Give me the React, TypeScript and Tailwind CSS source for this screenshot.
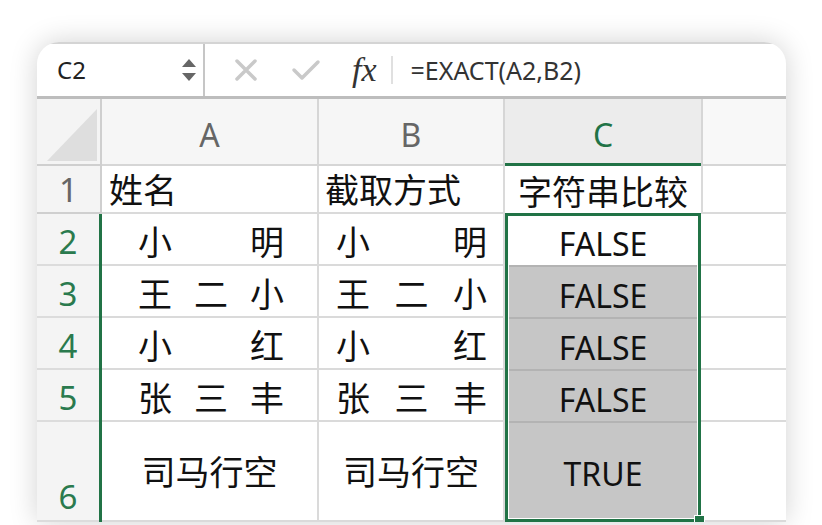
import React from "react";

const sans = { fontFamily: '"Noto Sans", "Noto Sans CJK SC", sans-serif' };

function Distributed({ chars, px }: { chars: string[]; px: string }) {
  return (
    <div className={`flex w-full justify-between ${px}`}>
      {chars.map((c, i) => (
        <span key={i}>{c}</span>
      ))}
    </div>
  );
}

const rowsAB: { a: string[]; b: string[] }[] = [
  { a: ["小", "明"], b: ["小", "明"] },
  { a: ["王", "二", "小"], b: ["王", "二", "小"] },
  { a: ["小", "红"], b: ["小", "红"] },
  { a: ["张", "三", "丰"], b: ["张", "三", "丰"] },
];

export default function App() {
  return (
    <div className="h-[525px] w-[822px] overflow-hidden bg-white pl-[37px] pr-[36px] pt-[42px]" style={sans}>
      <div className="relative w-[749px] overflow-hidden rounded-t-[22px] bg-white shadow-[0_0_28px_rgba(0,0,0,0.18)]">
        {/* Formula bar */}
        <div className="flex h-[57px] items-stretch border-t-2 border-b-[3px] border-t-[#d4d4d4] border-b-[#bdbdbd]">
          <div className="flex w-[168px] items-center justify-between border-r-2 border-[#c6c6c6] pl-[20px] pr-[6px] text-[24px] text-[#222]">
            <span className="leading-none">C2</span>
            <svg width="16" height="26" viewBox="0 0 16 26">
              <path d="M8 2 L15 10 L1 10 Z" fill="#666" />
              <path d="M1 16 L15 16 L8 24 Z" fill="#666" />
            </svg>
          </div>
          <div className="flex flex-1 items-center">
            <svg className="ml-[29px]" width="24" height="24" viewBox="0 0 24 24">
              <path d="M3 3 L21 21 M21 3 L3 21" stroke="#c9c9c9" strokeWidth="3.5" strokeLinecap="round" />
            </svg>
            <svg className="ml-[33px]" width="30" height="24" viewBox="0 0 30 24">
              <path d="M3 12 L11 20 L27 4" stroke="#c9c9c9" strokeWidth="3.5" fill="none" strokeLinecap="round" strokeLinejoin="round" />
            </svg>
            <span
              className="ml-[31px] text-[34px] italic leading-none text-[#333]"
              style={{ fontFamily: '"Liberation Serif", "DejaVu Serif", serif' }}
            >
              fx
            </span>
            <div className="ml-[14px] h-[28px] w-[2px] bg-[#e0e0e0]" />
            <span className="ml-[18px] text-[25px] leading-none text-[#333]">=EXACT(A2,B2)</span>
          </div>
        </div>

        {/* Grid */}
        <div className="grid grid-cols-[65px_217px_186px_196px_85px] grid-rows-[67px_48px_52px_52px_52px_52px_100px] text-[34px] leading-none text-[#111]">
          {/* header row */}
          <div className="relative border-r-2 border-b-2 border-[#cfcfcf] bg-[#f4f4f4]">
            <svg className="absolute bottom-[3px] right-[3px]" width="50" height="52" viewBox="0 0 50 52">
              <path d="M0 52 L50 52 L50 0 Z" fill="#dedede" />
            </svg>
          </div>
          <div className="flex items-end justify-center border-r-2 border-b-2 border-[#d6d6d6] bg-[#f6f6f6] pb-[13px] text-[32px] text-[#666]">A</div>
          <div className="flex items-end justify-center border-r-2 border-b-2 border-[#d6d6d6] bg-[#f6f6f6] pb-[13px] text-[32px] text-[#666]">B</div>
          <div className="flex items-end justify-center border-b-[3px] border-[#217346] bg-[#ececec] pb-[12px] text-[32px] text-[#217346]">C</div>
          <div className="border-b-2 border-l-2 border-[#d6d6d6] bg-[#f8f8f8]" />

          {/* row 1 */}
          <div className="flex items-end justify-center border-r-2 border-b-2 border-[#cfcfcf] bg-[#f4f4f4] pb-[6px] text-[33px] text-[#666]">1</div>
          <div className="flex items-end border-r-2 border-b-2 border-[#dadada] pb-[5px] pl-[7px]">姓名</div>
          <div className="flex items-end border-r-2 border-b-2 border-[#dadada] pb-[5px] pl-[6px]">截取方式</div>
          <div className="flex items-end justify-center pb-[5px]">字符串比较</div>
          <div className="border-b-2 border-l-2 border-[#dadada]" />

          {/* row headers 2-6 */}
          <div className="row-span-5 flex flex-col border-r-[3px] border-[#217346] bg-[#f4f4f4] text-[33px] text-[#2a7a4e]">
            {["2", "3", "4", "5"].map((n) => (
              <div key={n} className="flex h-[52px] items-end justify-center border-b-2 border-[#dcdcdc] pb-[6px]">
                {n}
              </div>
            ))}
            <div className="flex h-[100px] items-end justify-center border-b-2 border-[#dcdcdc] pb-[7px]">6</div>
          </div>

          {/* column A */}
          <div className="row-span-5 flex flex-col border-r-2 border-[#dadada]">
            {rowsAB.map((r, i) => (
              <div key={i} className="flex h-[52px] items-end border-b-2 border-[#dadada] pb-[5px]">
                <Distributed chars={r.a} px="pl-[36px] pr-[33px]" />
              </div>
            ))}
            <div className="flex h-[100px] items-center justify-center border-b-2 border-[#dadada] pt-[2px]">司马行空</div>
          </div>

          {/* column B */}
          <div className="row-span-5 flex flex-col border-r-2 border-[#dadada]">
            {rowsAB.map((r, i) => (
              <div key={i} className="flex h-[52px] items-end border-b-2 border-[#dadada] pb-[5px]">
                <Distributed chars={r.b} px="pl-[17px] pr-[16px]" />
              </div>
            ))}
            <div className="flex h-[100px] items-center justify-center border-b-2 border-[#dadada] pt-[2px]">司马行空</div>
          </div>

          {/* column C selection */}
          <div className="relative row-span-5 -mt-[1px] border-[3px] border-[#217346] bg-white p-px text-[32px]">
            <div className="flex h-[48px] items-end justify-center pb-[5px]">FALSE</div>
            {["FALSE", "FALSE", "FALSE"].map((t, i) => (
              <div key={i} className="flex h-[52px] items-end justify-center border-t-2 border-[#b3b3b3] bg-[#c6c6c6] pb-[5px]">
                {t}
              </div>
            ))}
            <div className="flex h-[97px] items-center justify-center border-t-2 border-[#b3b3b3] bg-[#c6c6c6] pt-[6px]">TRUE</div>
            <div className="absolute -bottom-[7px] -right-[7px] h-[11px] w-[11px] border border-white bg-[#217346]" />
          </div>

          {/* column D */}
          <div className="row-span-5 flex flex-col">
            {[0, 1, 2, 3].map((i) => (
              <div key={i} className="h-[52px] border-b-2 border-[#dadada]" />
            ))}
            <div className="h-[100px] border-b-2 border-[#dadada]" />
          </div>
        </div>
      </div>
    </div>
  );
}
